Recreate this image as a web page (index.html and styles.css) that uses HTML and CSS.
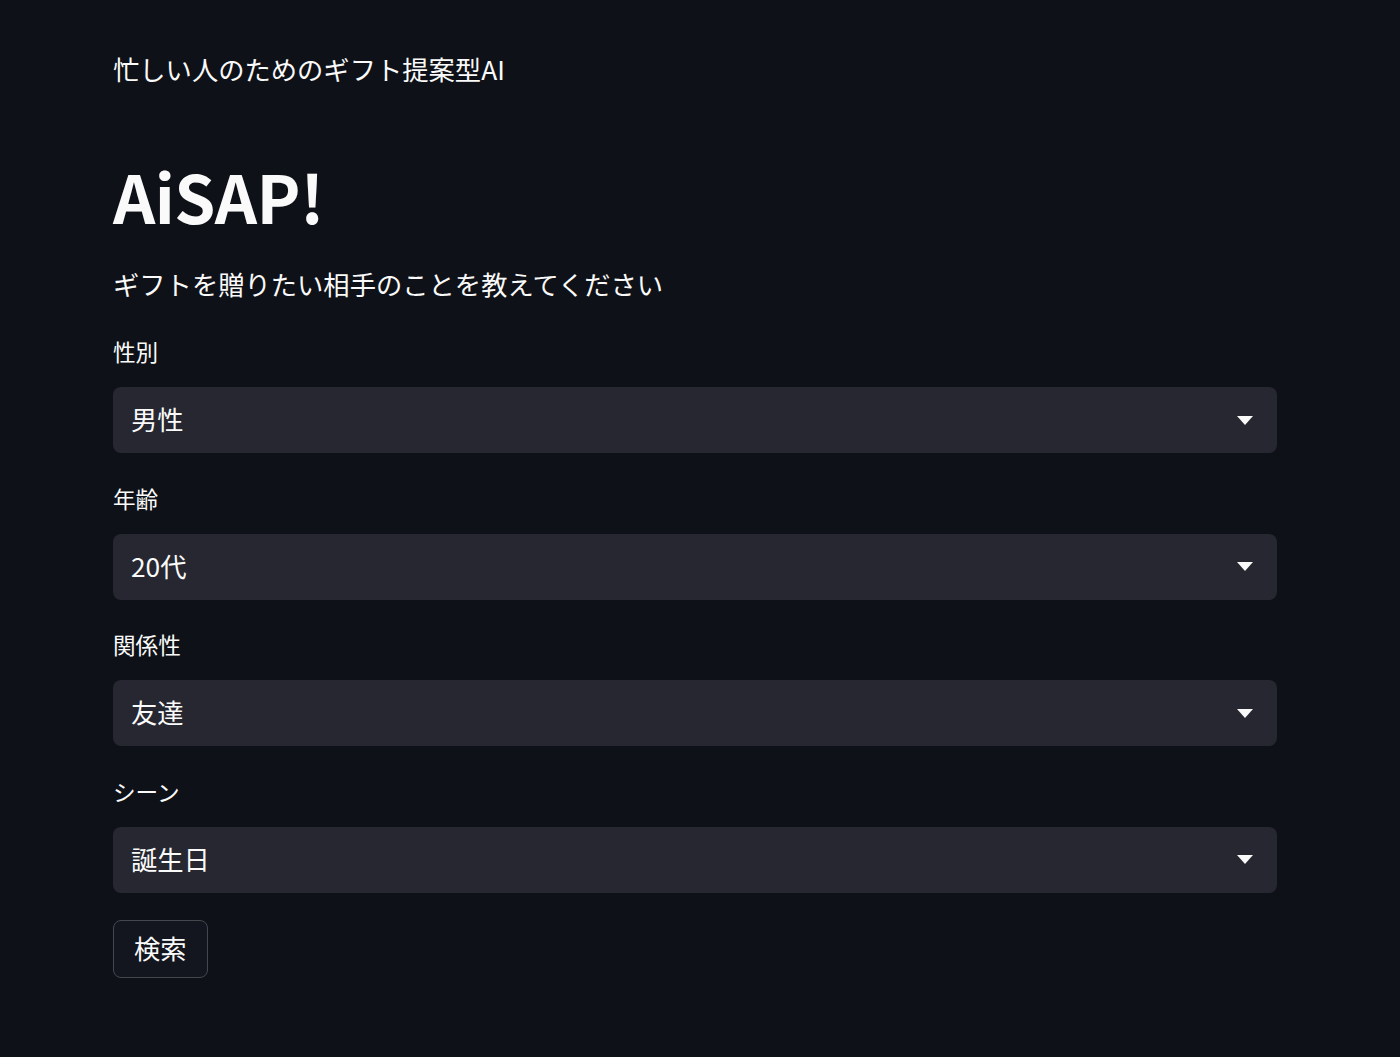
FILE: index.html
```html
<!DOCTYPE html>
<html lang="ja">
<head>
    <meta charset="UTF-8">
    <meta name="viewport" content="width=device-width, initial-scale=1.0">
    <title>AiSAP!</title>
    <link rel="stylesheet" href="styles.css">
</head>
<body>
    <div class="container">
        <p class="caption">忙しい人のためのギフト提案型AI</p>
        <h1>AiSAP!</h1>
        <p class="lead">ギフトを贈りたい相手のことを教えてください</p>

        <div class="field">
            <div class="field-label">性別</div>
            <div class="select">
                <span class="select-value">男性</span>
                <svg class="select-arrow" viewBox="0 0 16 9"><path d="M0 0h16L8 9z" fill="#fafafa"/></svg>
            </div>
        </div>

        <div class="field">
            <div class="field-label">年齢</div>
            <div class="select">
                <span class="select-value">20代</span>
                <svg class="select-arrow" viewBox="0 0 16 9"><path d="M0 0h16L8 9z" fill="#fafafa"/></svg>
            </div>
        </div>

        <div class="field">
            <div class="field-label">関係性</div>
            <div class="select">
                <span class="select-value">友達</span>
                <svg class="select-arrow" viewBox="0 0 16 9"><path d="M0 0h16L8 9z" fill="#fafafa"/></svg>
            </div>
        </div>

        <div class="field">
            <div class="field-label">シーン</div>
            <div class="select">
                <span class="select-value">誕生日</span>
                <svg class="select-arrow" viewBox="0 0 16 9"><path d="M0 0h16L8 9z" fill="#fafafa"/></svg>
            </div>
        </div>

        <button class="search-btn">検索</button>
    </div>
</body>
</html>
```

FILE: styles.css
```css
* {
    margin: 0;
    padding: 0;
    box-sizing: border-box;
}

body {
    font-family: "Noto Sans CJK JP", "Noto Sans", sans-serif;
    background-color: #0e1117;
    color: #fafafa;
    min-height: 100vh;
}

.container {
    width: 1164px;
    margin-left: 113px;
    padding-top: 48px;
}

.caption {
    font-size: 26.3px;
    line-height: 41px;
}

h1 {
    font-size: 66px;
    font-weight: 700;
    line-height: 84px;
    margin-top: 64px;
    letter-spacing: -0.6px;
}

.lead {
    font-size: 26.3px;
    line-height: 41px;
    margin-top: 26px;
}

.field {
    margin-top: 29.5px;
}

.field:first-of-type {
    margin-top: 32px;
}

.field-label {
    font-size: 22.6px;
    line-height: 32px;
    margin-bottom: 19px;
}

.select {
    height: 66px;
    background: #262730;
    border-radius: 8px;
    display: flex;
    align-items: center;
    justify-content: space-between;
    padding: 0 24px 3px 18px;
}

.select-value {
    font-size: 26.3px;
}

.select-arrow {
    width: 16px;
    height: 9px;
    margin-top: 3px;
}

.search-btn {
    margin-top: 27px;
    height: 58px;
    padding: 0 20px 2px;
    font-family: inherit;
    font-size: 26.3px;
    color: #fafafa;
    background: #13161e;
    border: 1.5px solid #45474f;
    border-radius: 8px;
}
```
